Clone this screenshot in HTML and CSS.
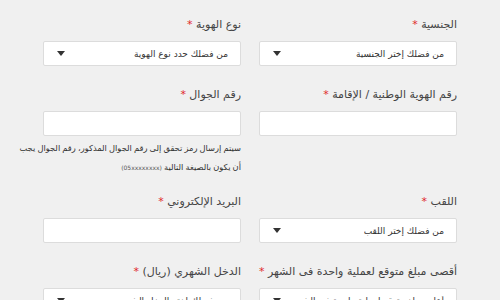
FILE: index.html
```html
<!DOCTYPE html>
<html lang="ar" dir="rtl">
<head>
  <meta charset="UTF-8">
  <title>بيانات العميل</title>
  <link rel="stylesheet" href="styles.css">
</head>
<body>
  <form class="form-grid">
    <div class="field">
      <label>الجنسية <span class="req">*</span></label>
      <div class="select">
        <span>من فضلك إختر الجنسية</span>
        <i class="caret"></i>
      </div>
    </div>
    <div class="field">
      <label>نوع الهوية <span class="req">*</span></label>
      <div class="select">
        <span>من فضلك حدد نوع الهوية</span>
        <i class="caret"></i>
      </div>
    </div>

    <div class="field">
      <label>رقم الهوية الوطنية / الإقامة <span class="req">*</span></label>
      <input class="input" type="text">
    </div>
    <div class="field">
      <label>رقم الجوال <span class="req">*</span></label>
      <input class="input" type="text">
      <p class="help">سيتم إرسال رمز تحقق إلى رقم الجوال المذكور، رقم الجوال يجب<br>أن يكون بالصيغة التالية <small>(05xxxxxxxx)</small></p>
    </div>

    <div class="field">
      <label>اللقب <span class="req">*</span></label>
      <div class="select">
        <span>من فضلك إختر اللقب</span>
        <i class="caret"></i>
      </div>
    </div>
    <div class="field">
      <label>البريد الإلكتروني <span class="req">*</span></label>
      <input class="input" type="text">
    </div>

    <div class="field">
      <label>أقصى مبلغ متوقع لعملية واحدة فى الشهر <span class="req">*</span></label>
      <div class="select">
        <span>أعلى مبلغ متوقع لعملية واحدة في الشهر</span>
        <i class="caret"></i>
      </div>
    </div>
    <div class="field">
      <label>الدخل الشهري (ريال) <span class="req">*</span></label>
      <div class="select">
        <span>من فضلك إختر الدخل الشهري</span>
        <i class="caret"></i>
      </div>
    </div>
  </form>
</body>
</html>
```

FILE: styles.css
```css
* {
  margin: 0;
  padding: 0;
  box-sizing: border-box;
}
body {
  font-family: 'DejaVu Sans', sans-serif;
  background: #f0f0f0;
  color: #444;
  overflow: hidden;
}
.form-grid {
  display: grid;
  grid-template-columns: 198px 198px;
  column-gap: 18px;
  row-gap: 21px;
  padding: 17px 43px 0;
}
.field label {
  display: block;
  font-size: 11px;
  line-height: 16px;
  margin-bottom: 8px;
  color: #444;
  white-space: nowrap;
}
.req {
  color: #e0282a;
}
.select, .input {
  display: flex;
  align-items: center;
  justify-content: space-between;
  width: 100%;
  height: 25px;
  background: #fff;
  border: 1px solid #dcdcdc;
  border-radius: 2px;
  padding: 0 12px 0 13px;
  font-family: inherit;
  font-size: 9px;
  color: #333;
}
.select span {
  white-space: nowrap;
  overflow: hidden;
}
.caret {
  width: 0;
  height: 0;
  border-left: 4.5px solid transparent;
  border-right: 4.5px solid transparent;
  border-top: 5px solid #333;
  flex-shrink: 0;
}
.help {
  margin-top: 3px;
  font-size: 8.3px;
  line-height: 19px;
  color: #333;
  white-space: nowrap;
  word-spacing: -0.5px;
  margin-bottom: -4px;
}
.help small {
  font-size: 6px;
  color: #555;
}
```
